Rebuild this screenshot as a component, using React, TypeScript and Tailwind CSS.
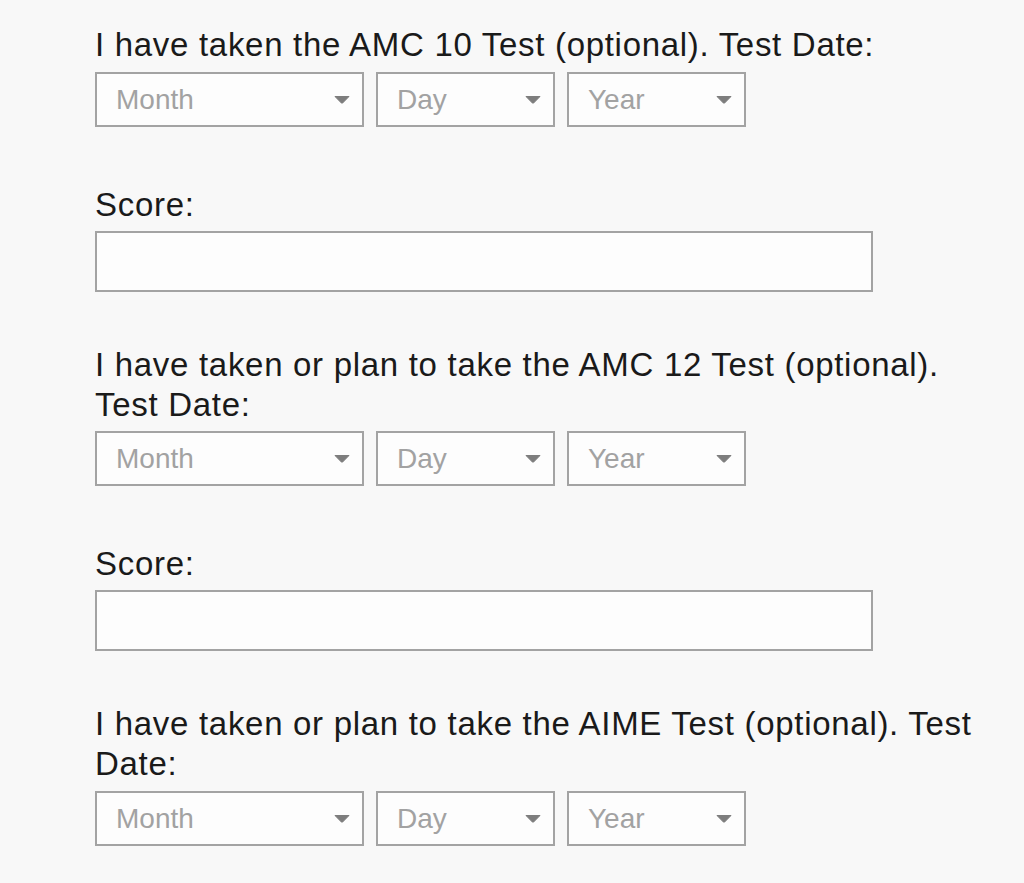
import React from "react";

function Caret() {
  return (
    <svg width="16" height="9" viewBox="0 0 16 9" className="shrink-0">
      <path d="M1 1.5 L15 1.5 L8.6 8 Q8 8.6 7.4 8 Z" fill="#7d7d7d" stroke="#7d7d7d" strokeWidth="1" strokeLinejoin="round" />
    </svg>
  );
}

function FakeSelect({ label, width }: { label: string; width: string }) {
  return (
    <div
      className={`${width} h-[55px] border-2 border-[#a3a3a3] bg-[#fdfdfd] flex items-center justify-between pl-[19px] pr-[12px]`}
    >
      <span className="text-[28px] tracking-normal text-[#a2a2a2]">{label}</span>
      <Caret />
    </div>
  );
}

function DateRow() {
  return (
    <div className="flex gap-[12px]">
      <FakeSelect label="Month" width="w-[269px]" />
      <FakeSelect label="Day" width="w-[179px]" />
      <FakeSelect label="Year" width="w-[179px]" />
    </div>
  );
}

function ScoreField() {
  return (
    <div className="mt-[58px]">
      <label className="block leading-[40px]">Score:</label>
      <input
        type="text"
        className="mt-[6px] block w-[778px] h-[61px] border-2 border-[#a3a3a3] bg-[#fdfdfd] outline-none px-3"
      />
    </div>
  );
}

export default function App() {
  return (
    <div
      className="min-h-screen bg-[#f8f8f8] text-[#1a1a1a] text-[33px] tracking-[0.7px] pl-[95px] pt-[25px]"
      style={{ fontFamily: '"Liberation Sans", Arial, Helvetica, sans-serif' }}
    >
      <div className="w-[900px]">
        {/* AMC 10 */}
        <p className="leading-[40px]">I have taken the AMC 10 Test (optional). Test Date:</p>
        <div className="mt-[7px]">
          <DateRow />
        </div>
        <ScoreField />

        {/* AMC 12 */}
        <p className="mt-[53px] leading-[40px]">
          I have taken or plan to take the AMC 12 Test (optional). Test Date:
        </p>
        <div className="mt-[6px]">
          <DateRow />
        </div>
        <ScoreField />

        {/* AIME */}
        <p className="mt-[53px] leading-[40px]">
          I have taken or plan to take the AIME Test (optional). Test Date:
        </p>
        <div className="mt-[7px]">
          <DateRow />
        </div>
      </div>
    </div>
  );
}
